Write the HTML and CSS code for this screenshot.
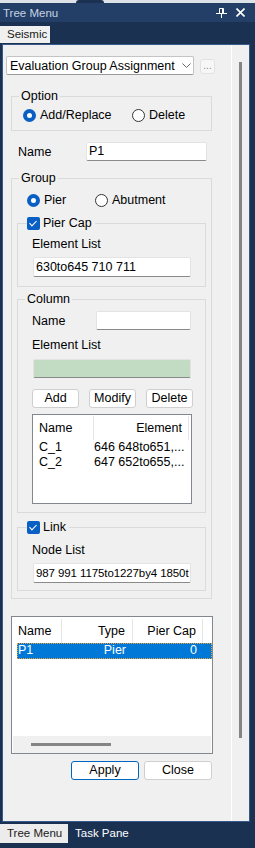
FILE: index.html
```html
<!DOCTYPE html>
<html lang="en">
<head>
    <meta charset="UTF-8">
    <meta name="viewport" content="width=device-width, initial-scale=1.0">
    <title>Tree Menu</title>
    <link rel="stylesheet" href="styles.css">
</head>
<body>

<div class="top-strip"><span class="notch"></span></div>

<div class="title-bar">
    <span class="title">Tree Menu</span>
    <span class="title-icons">
        <svg width="11" height="10" viewBox="0 0 11 10">
            <path d="M3.5 0.5 H7.5 V5.5 H3.5 Z" fill="none" stroke="#fff" stroke-width="1"/>
            <path d="M6.5 0.5 V5.5" stroke="#fff" stroke-width="1"/>
            <path d="M0 5.5 H11" stroke="#fff" stroke-width="1"/>
            <path d="M5.5 5.5 V10" stroke="#fff" stroke-width="1"/>
        </svg>
        <svg width="9" height="9" viewBox="0 0 9 9">
            <path d="M0.5 0.5 L8.5 8.5 M8.5 0.5 L0.5 8.5" stroke="#fff" stroke-width="1.6"/>
        </svg>
    </span>
</div>

<div class="doc-tabs">
    <div class="doc-tab">Seismic</div>
</div>

<div class="panel">
    <div class="content">

        <div class="combo-row">
            <div class="combo">
                <span class="combo-text">Evaluation Group Assignment</span>
                <svg width="9" height="5" viewBox="0 0 9 5">
                    <path d="M0.5 0.5 L4.5 4.5 L8.5 0.5" fill="none" stroke="#666" stroke-width="1"/>
                </svg>
            </div>
            <div class="dots-btn">...</div>
        </div>

        <fieldset class="box option-box">
            <legend>Option</legend>
            <div class="radio-row">
                <span class="radio checked first"><span class="dot"></span>Add/Replace</span>
                <span class="radio"><span class="dot"></span>Delete</span>
            </div>
        </fieldset>

        <div class="name-row">
            <span class="name-label">Name</span>
            <div class="field name-field">P1</div>
        </div>

        <fieldset class="box group-box">
            <legend>Group</legend>
            <div class="radio-row group-radios">
                <span class="radio checked first"><span class="dot"></span>Pier</span>
                <span class="radio"><span class="dot"></span>Abutment</span>
            </div>

            <fieldset class="box sub-box">
                <legend class="check-legend"><span class="check"></span>Pier Cap</legend>
                <div class="sub-label">Element List</div>
                <div class="field wide-field">630to645 710 711</div>
            </fieldset>

            <fieldset class="box sub-box column-box">
                <legend>Column</legend>
                <div class="col-name-row">
                    <span>Name</span>
                    <div class="field col-name-field"></div>
                </div>
                <div class="sub-label el-label">Element List</div>
                <div class="field wide-field green-field"></div>
                <div class="btn-row">
                    <span class="btn">Add</span>
                    <span class="btn">Modify</span>
                    <span class="btn">Delete</span>
                </div>
                <div class="list column-list">
                    <div class="list-head">
                        <span class="c-name">Name</span>
                        <span class="c-elem">Element</span>
                    </div>
                    <div class="list-row">
                        <span class="c-name">C_1</span>
                        <span class="c-elem">646 648to651,...</span>
                    </div>
                    <div class="list-row">
                        <span class="c-name">C_2</span>
                        <span class="c-elem">647 652to655,...</span>
                    </div>
                </div>
            </fieldset>

            <fieldset class="box sub-box link-box">
                <legend class="check-legend"><span class="check"></span>Link</legend>
                <div class="sub-label">Node List</div>
                <div class="field wide-field node-field">987 991 1175to1227by4 1850t</div>
            </fieldset>
        </fieldset>

        <div class="list group-list">
            <div class="list-head">
                <span class="g-name">Name</span>
                <span class="g-type">Type</span>
                <span class="g-cap">Pier Cap</span>
            </div>
            <div class="list-row selected">
                <span class="g-name">P1</span>
                <span class="g-type">Pier</span>
                <span class="g-cap">0</span>
            </div>
            <div class="hscroll"><div class="hthumb"></div></div>
        </div>

        <div class="dialog-buttons">
            <span class="btn dlg-btn default">Apply</span>
            <span class="btn dlg-btn">Close</span>
        </div>

    </div>
    <div class="vscroll"><div class="vthumb"></div></div>
</div>

<div class="pane-tabs">
    <div class="pane-tab active">Tree Menu</div>
    <div class="pane-tab">Task Pane</div>
</div>

</body>
</html>
```

FILE: styles.css
```css
* {
    box-sizing: border-box;
}

body {
    margin: 0;
    width: 255px;
    height: 848px;
    overflow: hidden;
    background-color: #1b3152;
    font-family: "Liberation Sans", Arial, sans-serif;
    font-size: 12.5px;
    color: #000;
}

/* Barra superior */
.top-strip {
    height: 3px;
    background-color: #dde2e8;
}

.top-strip .notch {
    display: block;
    width: 28px;
    height: 3px;
    margin-left: 76px;
    background-color: #1b3152;
    border-radius: 4px 4px 0 0;
}

.title-bar {
    height: 19px;
    background-color: #243f67;
    display: flex;
    align-items: center;
    justify-content: space-between;
    padding: 0 10px 0 3px;
}

.title {
    color: #c6d3e4;
    font-size: 11.5px;
}

.title-icons {
    display: flex;
    align-items: center;
    gap: 9px;
}

.doc-tabs {
    height: 22px;
    padding-top: 4px;
}

.doc-tab {
    width: 50px;
    height: 17px;
    line-height: 17px;
    padding-left: 7px;
    background-color: #f0f0f0;
    color: #1a1a1a;
    font-size: 11.5px;
}

/* Painel principal */
.panel {
    display: flex;
    margin-left: 2px;
    width: 248px;
    height: 778px;
    border: 1px solid #35598a;
    background-color: #f0f0f0;
}

.content {
    width: 228px;
}

.vscroll {
    width: 18px;
    border-left: 1px solid #fff;
    padding: 17px 0 0 7px;
}

.vthumb {
    width: 3px;
    height: 676px;
    background-color: #858585;
}

/* Combo */
.combo-row {
    display: flex;
    align-items: flex-start;
    margin: 11px 0 0 3px;
}

.combo {
    width: 188px;
    height: 19px;
    display: flex;
    align-items: center;
    background-color: #fff;
    border: 1px solid #c4c4c4;
    border-bottom-color: #9a9a9a;
    border-radius: 2px;
    padding-left: 3px;
}

.combo-text {
    width: 168px;
    overflow: hidden;
    white-space: nowrap;
}

.combo svg {
    margin-left: 4px;
}

.dots-btn {
    width: 15px;
    height: 15px;
    margin: 3px 0 0 6px;
    background-color: #f7f7f7;
    border: 1px solid #e2e2e2;
    border-radius: 3px;
    color: #888;
    font-size: 10px;
    line-height: 12px;
    text-align: center;
}

/* Grupos */
.box {
    margin: 0;
    padding: 0;
    border: 1px solid #dadada;
    min-inline-size: 0;
}

.box legend {
    padding: 0 2px;
    margin-left: 7px;
    line-height: 14px;
}

.option-box {
    width: 201px;
    margin: 14px 0 0 8px;
    padding-bottom: 7px;
}

.radio-row {
    display: flex;
    height: 16px;
    align-items: center;
    margin-top: 4px;
    padding-left: 11px;
}

.radio {
    display: flex;
    align-items: center;
    gap: 4px;
}

.radio.first {
    width: 109px;
}

.radio .dot {
    width: 13px;
    height: 13px;
    border-radius: 50%;
    border: 1px solid #333;
    background-color: #fff;
}

.radio.checked .dot {
    border: 4px solid #0a5fc5;
    background-color: #fff;
}

.name-row {
    display: flex;
    align-items: center;
    height: 19px;
    margin: 11px 0 0 15px;
}

.name-label {
    width: 68px;
}

.field {
    height: 20px;
    line-height: 18px;
    padding-left: 2px;
    background-color: #fff;
    border: 1px solid #e3e3e3;
    border-bottom-color: #8a8a8a;
    border-radius: 2px;
    white-space: nowrap;
    overflow: hidden;
}

.name-field {
    width: 121px;
    height: 19px;
    line-height: 16px;
}

.group-box {
    width: 201px;
    margin: 10px 0 0 8px;
    padding: 0 0 7px 5px;
}

.group-box > legend {
    margin-left: 2px;
}

.group-radios {
    margin-top: 7px;
    padding-left: 10px;
}

.group-radios .radio.first {
    width: 68px;
}

.sub-box {
    width: 189px;
    margin-top: 7px;
    padding-bottom: 9px;
}

.check-legend {
    display: flex;
    align-items: center;
    gap: 3px;
    line-height: 16px !important;
    margin-left: 9px !important;
    padding: 0 3px 0 0 !important;
}

.check {
    position: relative;
    width: 13px;
    height: 13px;
    border-radius: 2px;
    background-color: #0a5fc5;
}

.check::after {
    content: '';
    position: absolute;
    left: 4px;
    top: 2px;
    width: 3px;
    height: 6px;
    border: solid #fff;
    border-width: 0 1px 1px 0;
    transform: rotate(45deg);
}

.sub-label {
    margin: 6px 0 0 14px;
    line-height: 14px;
}

.wide-field {
    width: 158px;
    margin: 6px 0 0 15px;
}

.node-field {
    font-size: 11.5px;
    letter-spacing: -0.1px;
}

.column-box {
    margin-top: 5px;
    padding-bottom: 8px;
}

.column-box > legend {
    margin-left: 7px;
}

.col-name-row {
    display: flex;
    align-items: center;
    height: 19px;
    margin: 5px 0 0 14px;
}

.col-name-row span {
    width: 64px;
}

.col-name-field {
    width: 95px;
    height: 19px;
}

.el-label {
    margin-top: 8px;
}

.green-field {
    height: 19px;
    margin-top: 7px;
    background-color: #c1dcc3;
}

.btn-row {
    display: flex;
    gap: 10px;
    margin: 11px 0 0 14px;
}

.btn {
    height: 19px;
    line-height: 17px;
    text-align: center;
    background-color: #fff;
    border: 1px solid #cfcfcf;
    border-radius: 3px;
}

.btn-row .btn {
    width: 47px;
}

/* Listas */
.list {
    background-color: #fff;
    border: 1px solid #828790;
}

.list-head,
.list-row {
    display: flex;
}

.list-head {
    height: 25px;
    align-items: center;
}

.list-head span {
    border-right: 1px solid #e5e5e5;
    height: 24px;
    line-height: 24px;
}

.column-list {
    width: 160px;
    height: 90px;
    margin: 6px 0 0 14px;
}

.column-list .c-name {
    width: 61px;
    padding-left: 6px;
}

.column-list .c-elem {
    width: 95px;
    text-align: right;
    padding-right: 6px;
    white-space: nowrap;
}

.column-list .list-row {
    height: 15px;
    line-height: 15px;
}

.column-list .list-row span {
    border-right: 1px solid transparent;
}

.link-box {
    margin-top: 6px;
    padding-bottom: 7px;
}

.link-box .sub-label {
    margin-top: 8px;
}

.group-list {
    position: relative;
    width: 202px;
    height: 138px;
    margin: 17px 0 0 8px;
}

.group-list .list-head {
    margin-top: 1px;
}

.g-name {
    width: 50px;
    padding-left: 6px;
}

.g-type {
    width: 71px;
    text-align: right;
    padding-right: 7px;
}

.g-cap {
    width: 70px;
    text-align: right;
    padding-right: 6px;
}

.list-row.selected {
    height: 16px;
    line-height: 14px;
    margin-left: 5px;
    background-color: #0078d7;
    color: #fff;
    outline: 1px dotted #f0a030;
    outline-offset: -1px;
}

.list-row.selected .g-name {
    width: 45px;
    padding-left: 1px;
}

.hscroll {
    position: absolute;
    left: 1px;
    right: 1px;
    bottom: 0;
    height: 17px;
    background-color: #f0f0f0;
    padding: 7px 0 0 18px;
}

.hthumb {
    width: 80px;
    height: 3px;
    background-color: #858585;
}

.dialog-buttons {
    display: flex;
    justify-content: flex-end;
    gap: 5px;
    margin-top: 7px;
    padding-right: 19px;
}

.dlg-btn {
    width: 68px;
}

.dlg-btn.default {
    border-color: #0067c0;
}

/* Abas inferiores */
.pane-tabs {
    display: flex;
    height: 26px;
    padding-top: 2px;
    font-size: 11.5px;
}

.pane-tab {
    height: 19px;
    line-height: 19px;
    padding: 0 7px;
    color: #fff;
    white-space: nowrap;
}

.pane-tab.active {
    width: 68px;
    background-color: #ececec;
    color: #1a1a1a;
}
```
